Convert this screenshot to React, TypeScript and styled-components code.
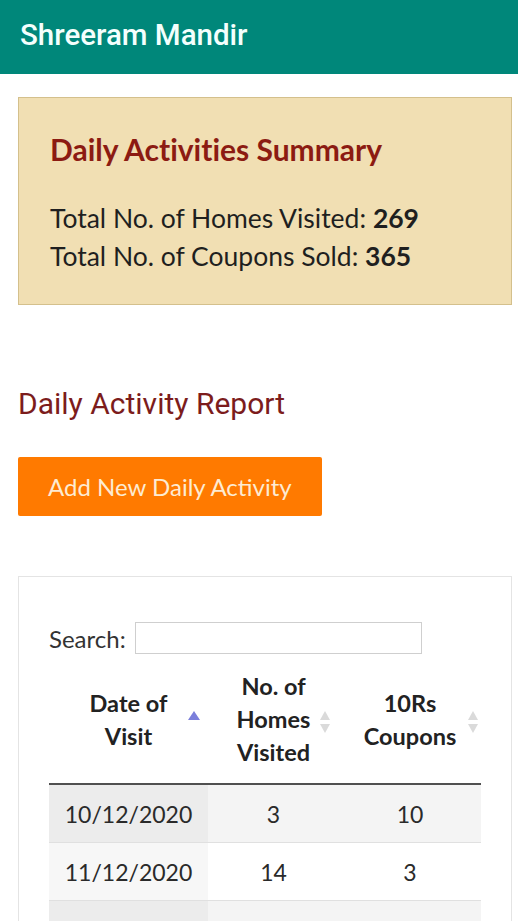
import React from 'react'
import styled, { createGlobalStyle } from 'styled-components'

const GlobalStyle = createGlobalStyle`
  html, body {
    margin: 0;
    padding: 0;
    background: #ffffff;
    font-family: Lato, 'Open Sans', sans-serif;
    font-variant-ligatures: none;
    color: #222;
    overflow: hidden;
  }
`

const Page = styled.div`
  width: 518px;
  min-height: 921px;
`

const TopBar = styled.header`
  height: 74px;
  background-color: #00877a;
  display: flex;
  align-items: center;
  padding: 0 20px 5px;
  box-sizing: border-box;
`

const BrandTitle = styled.h1`
  margin: 0;
  font-family: Roboto, sans-serif;
  font-weight: 500;
  font-size: 29.5px;
  color: #f4fffd;
`

const Content = styled.main`
  padding: 23px 6px 0 18px;
`

const SummaryBox = styled.section`
  background-color: #f1dfb3;
  border: 1px solid #d4c08c;
  padding: 33px 31px 29px;
  margin-bottom: 81px;
`

const SummaryTitle = styled.h2`
  margin: 0 0 32px;
  font-family: Lato, sans-serif;
  font-weight: 700;
  font-size: 30px;
  line-height: 36px;
  color: #8c1b12;
`

const SummaryLine = styled.div`
  font-size: 26.5px;
  line-height: 38px;
  color: #1f1f1f;

  b {
    font-weight: 700;
  }
`

const ReportTitle = styled.h2`
  margin: 0 0 36px;
  font-family: Roboto, sans-serif;
  font-weight: 400;
  font-size: 30px;
  line-height: 35px;
  color: #7c1c1c;
`

const AddButton = styled.button`
  display: block;
  background-color: #ff7a00;
  color: #fdebd2;
  border: none;
  border-radius: 2px;
  height: 59px;
  padding: 0 30px;
  font-family: Lato, sans-serif;
  font-size: 24px;
  margin-bottom: 60px;
`

const TableCard = styled.section`
  border: 1px solid #e4e4e4;
  padding: 45px 0 0 30px;
`

const SearchRow = styled.label`
  display: flex;
  align-items: center;
  gap: 9px;
  font-size: 24px;
  color: #333;
  margin-bottom: 6px;
`

const SearchInput = styled.input`
  width: 287px;
  height: 32px;
  box-sizing: border-box;
  border: 1px solid #cfcfcf;
  background: #fff;
`

const Table = styled.table`
  width: 432px;
  table-layout: fixed;
  border-collapse: collapse;
`

const HeadCell = styled.th<{ $w: number }>`
  position: relative;
  box-sizing: border-box;
  width: ${(p) => p.$w}px;
  padding: 10px 22px 14px;
  font-size: 23.5px;
  font-weight: 700;
  line-height: 33px;
  color: #222;
  text-align: center;
  border-bottom: 2px solid #505050;
`

const SortIcon = styled.span<{ $right: number; $shift: number }>`
  position: absolute;
  right: ${(p) => p.$right}px;
  top: 50%;
  transform: translateY(${(p) => p.$shift}px);
  display: flex;
`

const BodyCell = styled.td<{ $bg: string }>`
  height: 57px;
  padding: 0;
  font-size: 23px;
  color: #2a2a2a;
  text-align: center;
  background-color: ${(p) => p.$bg};
  border-top: 1px solid #e0e0e0;
`

const SortAsc = () => (
  <svg width="14" height="11" viewBox="0 0 14 11">
    <polygon points="7,1 13,10 1,10" fill="#7b7fdb" />
  </svg>
)

const SortBoth = () => (
  <svg width="12" height="24" viewBox="0 0 12 24">
    <polygon points="6,1 11,10 1,10" fill="#dadada" />
    <polygon points="6,23 11,14 1,14" fill="#dadada" />
  </svg>
)

const rows = [
  { date: '10/12/2020', homes: '3', coupons: '10' },
  { date: '11/12/2020', homes: '14', coupons: '3' },
  { date: '12/12/2020', homes: '11', coupons: '5' },
]

export default function App() {
  return (
    <Page>
      <GlobalStyle />
      <TopBar>
        <BrandTitle>Shreeram Mandir</BrandTitle>
      </TopBar>
      <Content>
        <SummaryBox>
          <SummaryTitle>Daily Activities Summary</SummaryTitle>
          <SummaryLine>
            Total No. of Homes Visited: <b>269</b>
          </SummaryLine>
          <SummaryLine>
            Total No. of Coupons Sold: <b>365</b>
          </SummaryLine>
        </SummaryBox>

        <ReportTitle>Daily Activity Report</ReportTitle>
        <AddButton>Add New Daily Activity</AddButton>

        <TableCard>
          <SearchRow>
            Search:
            <SearchInput type="search" />
          </SearchRow>
          <Table>
            <thead>
              <tr>
                <HeadCell $w={159}>
                  Date of
                  <br />
                  Visit
                  <SortIcon $right={7} $shift={-12}>
                    <SortAsc />
                  </SortIcon>
                </HeadCell>
                <HeadCell $w={131}>
                  No. of
                  <br />
                  Homes
                  <br />
                  Visited
                  <SortIcon $right={8} $shift={-12}>
                    <SortBoth />
                  </SortIcon>
                </HeadCell>
                <HeadCell $w={142}>
                  10Rs
                  <br />
                  Coupons
                  <SortIcon $right={2} $shift={-12}>
                    <SortBoth />
                  </SortIcon>
                </HeadCell>
              </tr>
            </thead>
            <tbody>
              {rows.map((r, i) => (
                <tr key={r.date}>
                  <BodyCell $bg={i % 2 === 0 ? '#ececec' : '#f7f7f7'}>{r.date}</BodyCell>
                  <BodyCell $bg={i % 2 === 0 ? '#f4f4f4' : '#ffffff'}>{r.homes}</BodyCell>
                  <BodyCell $bg={i % 2 === 0 ? '#f4f4f4' : '#ffffff'}>{r.coupons}</BodyCell>
                </tr>
              ))}
            </tbody>
          </Table>
        </TableCard>
      </Content>
    </Page>
  )
}
